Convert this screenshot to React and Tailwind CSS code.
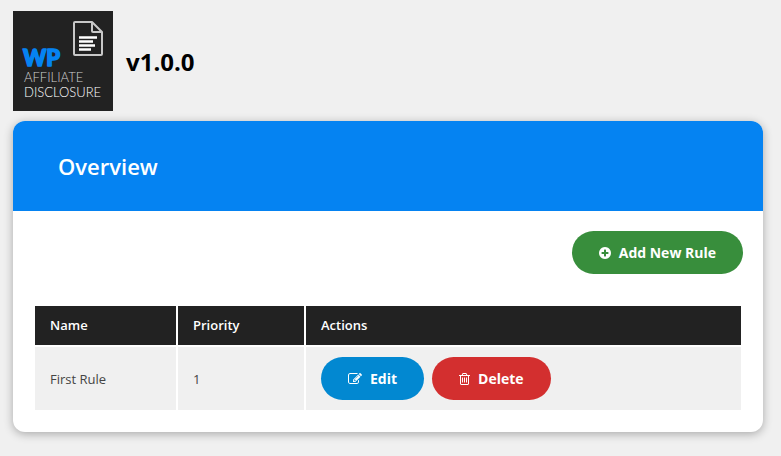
const ICONS = {
  plus: {
    box: "128 0 1536 1792",
    width: "w-3",
    path: "M1344 960v-128q0-26-19-45t-45-19h-256v-256q0-26-19-45t-45-19h-128q-26 0-45 19t-19 45v256h-256q-26 0-45 19t-19 45v128q0 26 19 45t45 19h256v256q0 26 19 45t45 19h128q26 0 45-19t19-45v-256h256q26 0 45-19t19-45zm320-64q0 209-103 385.5t-279.5 279.5-385.5 103-385.5-103-279.5-279.5-103-385.5 103-385.5 279.5-279.5 385.5-103 385.5 103 279.5 279.5 103 385.5z",
  },
  edit: {
    box: "0 0 1792 1792",
    width: "w-3.5",
    path: "M888 1184l116-116-152-152-116 116v56h96v96h56zm440-720q-16-16-33 1l-350 350q-17 17-1 33t33-1l350-350q17-17 1-33zm80 594v190q0 119-84.5 203.5t-203.5 84.5h-832q-119 0-203.5-84.5t-84.5-203.5v-832q0-119 84.5-203.5t203.5-84.5h832q63 0 117 25 15 7 18 23 3 17-9 29l-49 49q-14 14-32 8-23-6-45-6h-832q-66 0-113 47t-47 113v832q0 66 47 113t113 47h832q66 0 113-47t47-113v-126q0-13 9-22l64-64q15-15 35-7t20 29zm-96-738l288 288-672 672h-288v-288zm444 132l-92 92-288-288 92-92q28-28 68-28t68 28l152 152q28 28 28 68t-28 68z",
  },
  trash: {
    box: "192 0 1408 1792",
    width: "w-[11px]",
    path: "M704 736v576q0 14-9 23t-23 9h-64q-14 0-23-9t-9-23v-576q0-14 9-23t23-9h64q14 0 23 9t9 23zm256 0v576q0 14-9 23t-23 9h-64q-14 0-23-9t-9-23v-576q0-14 9-23t23-9h64q14 0 23 9t9 23zm256 0v576q0 14-9 23t-23 9h-64q-14 0-23-9t-9-23v-576q0-14 9-23t23-9h64q14 0 23 9t9 23zm128 724v-948h-896v948q0 22 7 40.5t14.5 27 10.5 8.5h832q3 0 10.5-8.5t14.5-27 7-40.5zm-672-1076h448l-48-117q-7-9-17-11h-317q-10 2-17 11zm928 32v64q0 14-9 23t-23 9h-96v948q0 83-47 143.5t-113 60.5h-832q-66 0-113-58.5t-47-141.5v-952h-96q-14 0-23-9t-9-23v-64q0-14 9-23t23-9h309l70-167q15-37 54-63t79-26h320q40 0 79 26t54 63l70 167h309q14 0 23 9t9 23z",
  },
};

const BUTTON_COLORS = {
  green: "bg-[#388e3c]",
  blue: "bg-[#0288d1]",
  red: "bg-[#d32f2f]",
};

function PillButton({ color, icon, children }) {
  const { box, width, path } = ICONS[icon];
  return (
    <button
      type="button"
      className={`inline-flex h-[43px] cursor-pointer items-center gap-2 rounded-full px-[27px] text-sm font-bold text-white ${BUTTON_COLORS[color]}`}
    >
      <svg viewBox={box} className={`h-3.5 shrink-0 ${width}`} fill="currentColor" aria-hidden="true">
        <path d={path} />
      </svg>
      {children}
    </button>
  );
}

function Logo() {
  return (
    <svg viewBox="0 0 100 100" className="size-[100px] shrink-0 bg-[#222]" role="img" aria-label="WP Affiliate Disclosure">
      <g fill="none" stroke="#c8c8c8" strokeWidth="2" strokeLinejoin="round">
        <path d="M62 11h17l10 10v22q0 1-1 1H62q-1 0-1-1V12q0-1 1-1z" />
        <path d="M79 11v9q0 1 1 1h9" />
      </g>
      <path d="M66 26.500h18M66 30.500h14M66 34.500h16M66 38.500h12" stroke="#fff" strokeWidth="2.600" />
      <text x="10" y="55" fill="#0583f2" stroke="#0583f2" strokeWidth="1.500" strokeLinejoin="round" className="font-['Lato'] text-[22px] font-black">WP</text>
      <text x="11" y="71" fill="#d0d0d0" className="font-['Lato'] text-[13px] font-light">AFFILIATE</text>
      <text x="11" y="86" fill="#fff" className="font-['Lato'] text-[13px] font-light">DISCLOSURE</text>
    </svg>
  );
}

const rules = [{ name: "First Rule", priority: 1 }];

export default function App() {
  return (
    <div className="min-h-screen bg-[#f0f0f0] pt-[11px] pr-[18px] pb-6 pl-[13px] font-['Open_Sans','Noto_Sans',sans-serif] text-[13px] text-[#444]">
      <header className="flex items-center gap-[13px]">
        <Logo />
        <h1 className="pt-0.5 text-2xl font-bold text-black">v1.0.0</h1>
      </header>

      <main className="mt-2.5 overflow-hidden rounded-xl bg-white shadow-[0_2px_10px_rgba(0,0,0,0.3)]">
        <div className="flex h-[90px] items-center bg-[#0583f2] px-[45px]">
          <h2 className="text-[22px] font-semibold text-white">Overview</h2>
        </div>

        <div className="p-5">
          <div className="mb-[30px] flex justify-end">
            <PillButton color="green" icon="plus">Add New Rule</PillButton>
          </div>

          <table className="w-full border-separate border-spacing-0.5 text-left">
            <thead>
              <tr className="h-[39px] bg-[#222] text-white">
                <th className="w-[141px] px-[15px] font-semibold">Name</th>
                <th className="w-[126px] px-[15px] font-semibold">Priority</th>
                <th className="px-[15px] font-semibold">Actions</th>
              </tr>
            </thead>
            <tbody>
              {rules.map((rule) => (
                <tr key={rule.name} className="bg-[#f0f0f0]">
                  <td className="px-[15px] pt-3 pb-2.5">{rule.name}</td>
                  <td className="px-[15px] pt-3 pb-2.5">{rule.priority}</td>
                  <td className="px-[15px] py-2.5">
                    <div className="flex flex-wrap gap-2">
                      <PillButton color="blue" icon="edit">Edit</PillButton>
                      <PillButton color="red" icon="trash">Delete</PillButton>
                    </div>
                  </td>
                </tr>
              ))}
            </tbody>
          </table>
        </div>
      </main>
    </div>
  );
}
